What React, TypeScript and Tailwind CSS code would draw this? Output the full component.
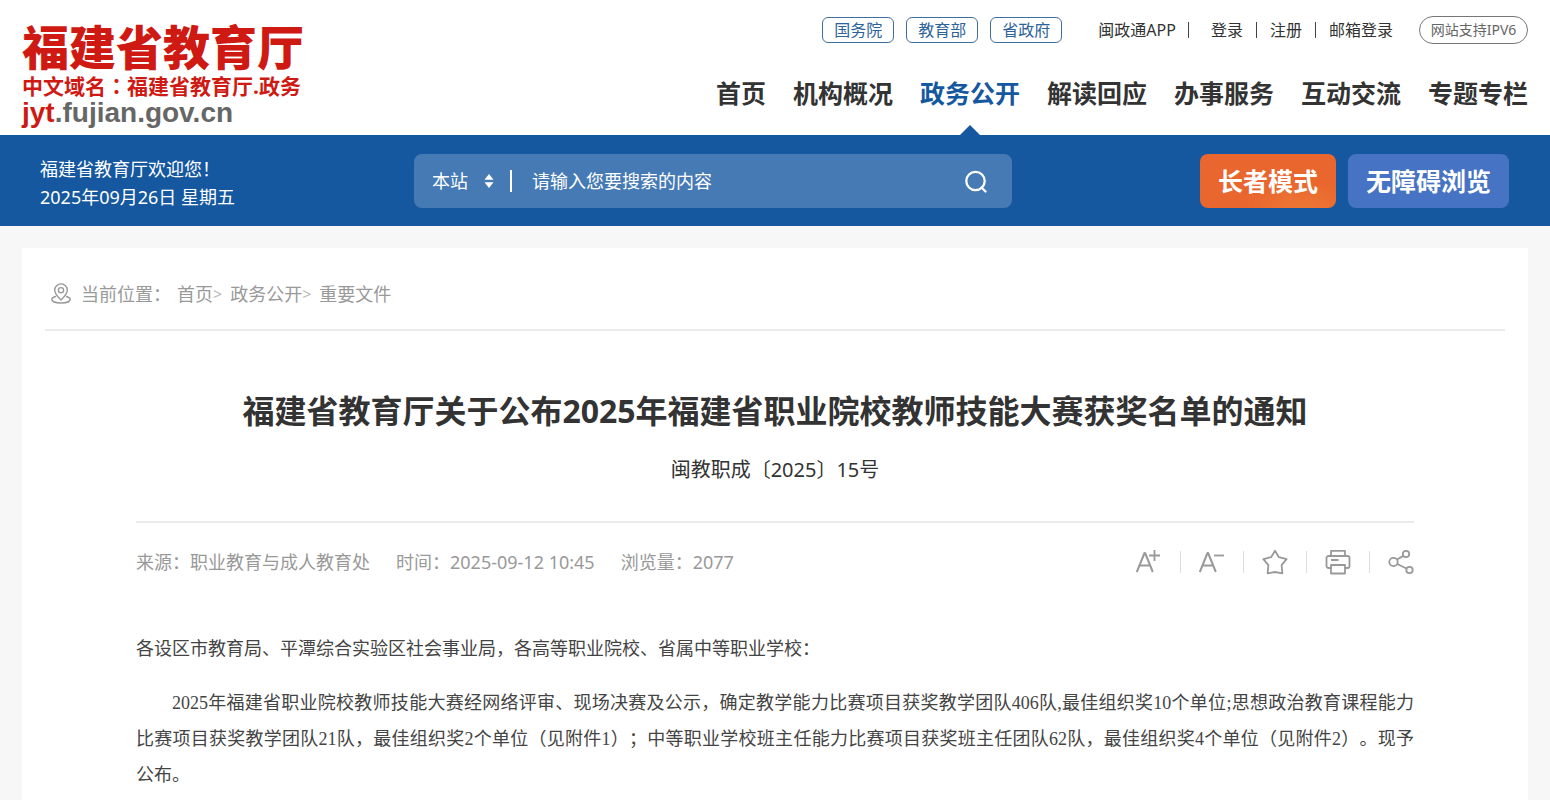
const portals = ["国务院", "教育部", "省政府"];

const accountLinks = ["登录", "注册", "邮箱登录"];

const navItems = [
  { label: "首页" },
  { label: "机构概况" },
  { label: "政务公开", active: true },
  { label: "解读回应" },
  { label: "办事服务" },
  { label: "互动交流" },
  { label: "专题专栏" },
];

const crumbs = ["首页", "政务公开", "重要文件"];

function Logo() {
  return (
    <a href="#" className="flex flex-col whitespace-nowrap font-bold text-[#cf1a14]">
      <span className="text-[47px] leading-[50px] font-black">福建省教育厅</span>
      <span className="text-[21px] leading-[26px]">
        中文域名
        <span lang="zh-TW" className="font-['Noto_Sans_CJK_TC',sans-serif]">
          ：
        </span>
        福建省教育厅.政务
      </span>
      <span className="font-['Liberation_Sans',sans-serif] text-[28px] leading-7 text-[#666]">
        <span className="text-[#cf1a14]">jyt</span>.fujian.gov.cn
      </span>
    </a>
  );
}

function TopLinks() {
  return (
    <div className="flex h-7 items-center text-base leading-6 text-[#333]">
      <div className="flex gap-3">
        {portals.map((p) => (
          <a
            key={p}
            href="#"
            className="flex h-[26px] w-[72px] items-center justify-center rounded-md border border-[#3f6f9f] text-[#2b6299]"
          >
            {p}
          </a>
        ))}
      </div>
      <a href="#" className="ml-9">
        闽政通APP
      </a>
      <span className="ml-3 mr-[22px] h-4 w-px bg-[#444]" />
      <div className="flex items-center gap-[13px]">
        {accountLinks.map((l, i) => (
          <div key={l} className="flex items-center gap-[13px]">
            {i > 0 && <span className="h-4 w-px bg-[#444]" />}
            <a href="#">{l}</a>
          </div>
        ))}
      </div>
      <a
        href="#"
        className="ml-[26px] flex h-7 w-[109px] items-center justify-center rounded-full border border-[#777] text-sm text-[#666]"
      >
        网站支持IPV6
      </a>
    </div>
  );
}

function Header() {
  return (
    <header className="flex h-[135px] items-stretch justify-between bg-white px-[22px]">
      <div className="pt-[22px]">
        <Logo />
      </div>
      <div className="flex flex-col items-end justify-between whitespace-nowrap pt-4">
        <TopLinks />
        <nav className="flex gap-[27px] text-[25px] leading-8 font-bold text-[#333]">
          {navItems.map((n) => (
            <a
              key={n.label}
              href="#"
              className={n.active ? "relative pb-[26px] text-[#15589f]" : "pb-[26px]"}
            >
              {n.label}
              {n.active && (
                <svg
                  viewBox="0 0 20 10"
                  className="absolute bottom-0 left-1/2 h-[10px] w-5 -translate-x-1/2"
                  fill="currentColor"
                >
                  <path d="M10 0l10 10H0z" />
                </svg>
              )}
            </a>
          ))}
        </nav>
      </div>
    </header>
  );
}

function SearchBox() {
  return (
    <form className="flex h-[54px] w-[598px] items-center rounded-lg bg-[#467ab4] pl-[18px] pr-6 text-lg text-white">
      <div className="flex items-center gap-3">
        <select
          aria-label="搜索范围"
          className="h-9 w-10 appearance-none bg-transparent leading-9 outline-none"
        >
          <option>本站</option>
        </select>
        <svg viewBox="0 0 10 14" className="h-[14px] w-[10px]" fill="currentColor">
          <path d="M5 0l4.500 5.800h-9zM5 14L.5 8.200h9z" />
        </svg>
      </div>
      <span className="ml-4 mr-5 h-[22px] w-[2px] bg-white" />
      <input
        type="text"
        aria-label="搜索内容"
        placeholder="请输入您要搜索的内容"
        className="min-w-0 flex-1 bg-transparent outline-none placeholder:text-white"
      />
      <button type="submit" aria-label="搜索">
        <svg
          viewBox="0 0 24 24"
          className="size-6"
          fill="none"
          stroke="currentColor"
          strokeWidth="2.300"
          strokeLinecap="round"
        >
          <circle cx="11.500" cy="12" r="9.200" />
          <path d="M17.500 18.500l4 4" />
        </svg>
      </button>
    </form>
  );
}

function Banner() {
  return (
    <div className="flex h-[91px] items-center justify-between whitespace-nowrap bg-[#16589f] pl-10 pr-[41px] pt-px text-white">
      <div className="flex items-center">
        <div className="w-[374px] pt-1 text-lg leading-7">
          <p>福建省教育厅欢迎您！</p>
          <p>2025年09月26日 星期五</p>
        </div>
        <SearchBox />
      </div>
      <div className="flex gap-3 text-[25px] font-bold">
        <button
          type="button"
          className="h-[54px] rounded-lg bg-radial-[at_75%_110%] from-[#ee7a35] to-[#e9662e] to-40% px-[18px] pt-[2px]"
        >
          长者模式
        </button>
        <button type="button" className="h-[54px] rounded-lg bg-[#4673c3] px-[18px] pt-[2px]">
          无障碍浏览
        </button>
      </div>
    </div>
  );
}

function Breadcrumb() {
  return (
    <div className="flex h-[83px] items-center border-b-2 border-[#ebebeb] px-[6px] pt-[10px] text-lg text-[#999]">
      <svg
        viewBox="0 0 20 21"
        className="mr-[10px] h-[21px] w-5"
        fill="none"
        stroke="currentColor"
        strokeWidth="1.400"
        strokeLinecap="round"
        strokeLinejoin="round"
      >
        <path d="M10 17C7 14 3.700 10.800 3.700 7.200a6.300 6.300 0 0 1 12.600 0C16.300 10.800 13 14 10 17z" />
        <circle cx="10" cy="7.200" r="2.600" />
        <path d="M4.500 13.500C2 14.300.8 15.400.8 16.500c0 2 4 3.500 9.200 3.500s9.200-1.500 9.200-3.500c0-1.100-1.200-2.200-3.700-3" />
      </svg>
      <span className="mr-[6px]">当前位置：</span>
      <nav className="flex items-center">
        {crumbs.map((c, i) => (
          <span key={c} className="flex items-center">
            {i > 0 && <span className="mr-2 text-base text-[#bbb]">&gt;</span>}
            <a href="#">{c}</a>
          </span>
        ))}
      </nav>
    </div>
  );
}

const tools = [
  {
    label: "放大字号",
    icon: (
      <>
        <path strokeWidth="2" d="M.8 23L8.500 4h.6l7.700 19M3.600 16.500H14" />
        <path d="M18.500 1v11M13 6.500h11" />
      </>
    ),
  },
  {
    label: "缩小字号",
    icon: (
      <>
        <path strokeWidth="2" d="M.8 23L8.500 4h.6l7.700 19M3.600 16.500H14" />
        <path d="M15 6.500h10" />
      </>
    ),
  },
  {
    label: "收藏",
    icon: (
      <path d="M13 1.800l3.900 6.400 7.700 2-5 6 .8 8.200-7.400-1.400-7.400 1.400.8-8.200-5-6 7.700-2z" />
    ),
  },
  {
    label: "打印",
    icon: (
      <>
        <path d="M6 7V1.800h14V7" />
        <path d="M6 19H3.500a2 2 0 0 1-2-2V9a2 2 0 0 1 2-2h19a2 2 0 0 1 2 2v8a2 2 0 0 1-2 2H20" />
        <path d="M6 16h14v8.500H6zM6 11h7.500" />
      </>
    ),
  },
  {
    label: "分享",
    icon: (
      <>
        <circle cx="5.500" cy="13" r="4.200" />
        <circle cx="18" cy="5" r="3.200" />
        <circle cx="21.500" cy="21" r="3.200" />
        <path d="M9 10.500l6.400-3.600M9.200 15l9.300 4.500" />
      </>
    ),
  },
];

function ArticleMeta() {
  return (
    <div className="flex items-center justify-between border-t-2 border-[#ebebeb] pt-[26px] text-lg leading-[26px] text-[#999]">
      <div className="flex gap-[26px]">
        <span>来源：职业教育与成人教育处</span>
        <span>时间：2025-09-12 10:45</span>
        <span>浏览量：2077</span>
      </div>
      <div className="flex items-center">
        {tools.map((t, i) => (
          <div key={t.label} className="flex items-center">
            {i > 0 && <span className="mx-[18px] h-[22px] w-px bg-[#ddd]" />}
            <button type="button" aria-label={t.label}>
              <svg
                viewBox="0 0 26 26"
                className="size-[26px]"
                fill="none"
                stroke="currentColor"
                strokeWidth="1.800"
                strokeLinejoin="round"
              >
                {t.icon}
              </svg>
            </button>
          </div>
        ))}
      </div>
    </div>
  );
}

export default function App() {
  return (
    <div
      lang="zh-CN"
      className="min-h-screen bg-[#f7f7f7] font-['Noto_Sans','Noto_Sans_CJK_SC',sans-serif] [text-spacing-trim:space-all]"
    >
      <Header />
      <Banner />
      <main className="mx-[22px] mt-[22px] bg-white px-[23px] pb-5">
        <Breadcrumb />
        <article className="px-[91px] pt-[56px] text-[#333]">
          <h1 className="text-center text-[32px] leading-[48px] font-bold">
            福建省教育厅关于公布2025年福建省职业院校教师技能大赛获奖名单的通知
          </h1>
          <p className="mt-5 mb-9 text-center text-xl leading-[30px]">闽教职成〔2025〕15号</p>
          <ArticleMeta />
          <div className="mt-14 text-justify font-['Liberation_Serif','Noto_Sans_CJK_SC',serif] text-lg leading-9 text-[#444]">
            <p>各设区市教育局、平潭综合实验区社会事业局，各高等职业院校、省属中等职业学校：</p>
            <p className="mt-[18px] indent-9">
              2025年福建省职业院校教师技能大赛经网络评审、现场决赛及公示，确定教学能力比赛项目获奖教学团队406队,最佳组织奖10个单位;思想政治教育课程能力比赛项目获奖教学团队21队，最佳组织奖2个单位（见附件1）；中等职业学校班主任能力比赛项目获奖班主任团队62队，最佳组织奖4个单位（见附件2）。现予
              <span className="whitespace-nowrap">公布。</span>
            </p>
          </div>
        </article>
      </main>
    </div>
  );
}
